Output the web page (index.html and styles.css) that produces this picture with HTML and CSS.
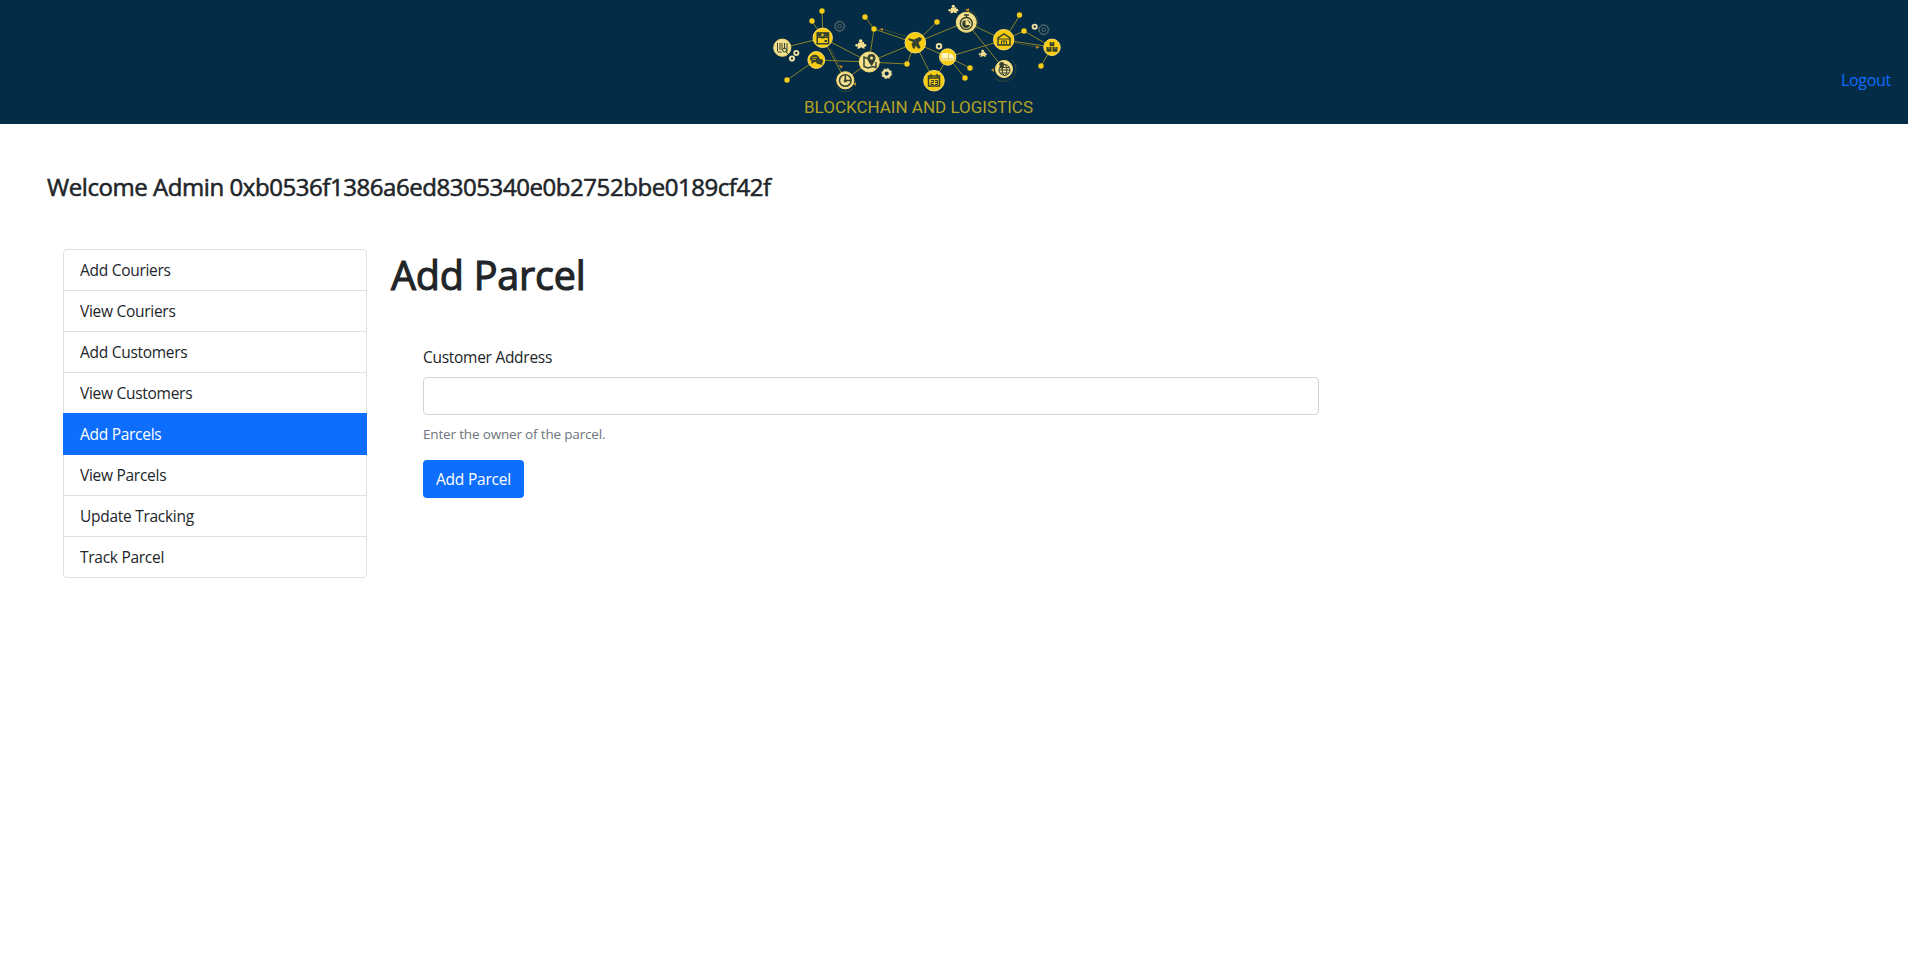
FILE: index.html
```html
<!DOCTYPE html>
<html lang="en">
<head>
<meta charset="utf-8">
<title>Blockchain and Logistics</title>
<link rel="stylesheet" href="styles.css">
</head>
<body>
<header class="topbar">
  <svg class="logo" viewBox="760 0 310 120" width="310" height="120" role="img" aria-label="Blockchain and Logistics">
    <defs>
      <g id="puzzle"><path d="M-2.800 -1.500L3.500 -2.200L3 .5L4 4.500L1 3.800L.5 2.500L-.5 4L-3.500 4.500L-2.600 1.800z"/><circle cx="0" cy="-3.300" r="1.800"/><circle cx="4" cy="1" r="1.500"/><circle cx="-4" cy="1" r="1.400"/></g>
      <g id="ring"><circle r="5.200" stroke-dasharray="1.3 1"/><circle r="4.500"/><circle r="1.800"/></g>
    </defs>
    <path class="links" d="M782 48L823 38L812 21M823 38L822 11M823 38L845 80L869 62L823 38M787 80L816 60L869 62L874 29L865 17M874 29L915 43L869 62L907 64L915 43L937 22M915 43L966 22L1004 40L1020 15M1004 40L1024 31L1052 47L1041 66M1004 40L1052 47M966 22L1004 69M915 43L948 57L1004 40M915 43L934 81L948 57L970 68M948 57L965 78"/>
    <path class="tracks" d="M831 49L840 67M882 29L905 36M837 87A11 11 0 0 0 853 89M970 11A11 11 0 0 1 975 29M1012 60A12 12 0 1 1 995 78M1015 43L1038 47"/>
    <path class="arrows" d="M839 65l4 1-2 3zM853 84l3-2v4zM879 29l4-1v3zM965 10l4-2v4zM1036 46l4 1-4 2zM991 70l3-2v4z"/>
    <g class="dots">
      <circle cx="822" cy="11" r="2.7"/><circle cx="812" cy="21" r="2.7"/><circle cx="865" cy="17" r="2.7"/><circle cx="874" cy="29" r="2.7"/><circle cx="787" cy="80" r="2.7"/><circle cx="907" cy="64" r="2.7"/><circle cx="937" cy="22" r="2.7"/><circle cx="970" cy="68" r="2.7"/><circle cx="965" cy="78" r="2.7"/><circle cx="1019.5" cy="15" r="2.7"/><circle cx="1024" cy="31" r="2.7"/><circle cx="1041" cy="66" r="2.7"/>
    </g>
    <g class="gears">
      <circle cx="796.3" cy="53" r="2.1"/><circle cx="792" cy="58.6" r="2.1"/><circle cx="939" cy="46.3" r="2.3"/><circle cx="1034.7" cy="26.7" r="2.1"/>
      <circle cx="886.7" cy="73.6" r="3.4" stroke-width="2.6"/><circle cx="886.7" cy="73.6" r="5" stroke-width="1" stroke-dasharray="2 1.9"/>
    </g>
    <g class="rings"><use href="#ring" x="839.7" y="26.3"/><use href="#ring" x="1043.7" y="29.7"/></g>
    <g class="pale"><use href="#puzzle" x="860.7" y="44.3"/><g transform="translate(953.3 9.3) scale(.9)"><use href="#puzzle"/></g><g transform="translate(982.7 53.5) scale(.75)"><use href="#puzzle"/></g></g>
    <g class="nodes">
      <circle class="pale" cx="782.3" cy="47.7" r="8.6"/><circle cx="822.7" cy="37.8" r="9.7"/><circle cx="816.3" cy="60" r="8.4"/>
      <circle class="pale" cx="845.3" cy="80.3" r="8.6"/><circle class="pale" cx="869.3" cy="62" r="10"/><circle cx="915.3" cy="42.7" r="10.3"/>
      <circle class="pale" cx="966.3" cy="22.3" r="10"/><circle cx="1003.7" cy="39.7" r="10.2"/><circle cx="1052" cy="47.3" r="8.2"/>
      <circle cx="947.7" cy="57" r="8.2"/><circle cx="934" cy="80.7" r="10.3"/><circle class="pale" cx="1004" cy="69" r="8.5"/>
    </g>
    <!-- barcode and scanner -->
    <path class="ink-line" d="M777.5 43v8M780 43v7M782 43v7M784.500 43v6M787 43v9M777.500 52h4"/><circle class="ink-line" cx="784.5" cy="50" r="2"/><path class="ink-line" d="M786 52l2 2"/>
    <!-- parcel -->
    <path class="ink-line wide" d="M817.200 33h11.300v10.800h-11.300zM817 37.300h12"/><path class="ink" d="M817 32.500h4.500v4H817zM823.500 32.500h5v4h-5zM824.500 40h2.500v2h-2.500zM821 36.500h3.500v2H821z"/>
    <!-- chat bubbles -->
    <ellipse class="ink" cx="814.700" cy="58.500" rx="4.700" ry="3.700"/><path class="ink" d="M811.500 61v3l3-2zM821 62l1.500 3.500-4-2z"/><ellipse class="ink" cx="819.500" cy="61.500" rx="3.500" ry="2.800"/><path class="sun-line" d="M812 57.500h5M812 59.500h4"/>
    <!-- pie clock -->
    <circle class="ink-line wide" cx="845.300" cy="80.500" r="5.800"/><path class="ink-line wide" d="M845.300 74.500v6h6"/><circle class="ink" cx="845.300" cy="80.800" r="1.600"/>
    <!-- map with pin -->
    <path class="ink-line wide" d="M869 59l-5-2v9.500l4 1.500 5-1.500 3 1V62"/><path class="ink" d="M871.500 66c-4-5-4-7-4-8a4 4 0 0 1 8 0c0 1 0 3-4 8z"/><circle class="pale" cx="871.500" cy="58" r="1.500"/>
    <!-- plane -->
    <path class="ink" d="M908.500 38.200L914 39.500L919.500 37L922 38.500L920.500 41L918.500 42.500L920.500 47.500L918.500 49L915.500 45.500L915 48.500L913 48.500L911.500 44L913 42L908.500 40z"/>
    <!-- stopwatch -->
    <circle class="ink-line wide" cx="966.300" cy="23.500" r="6"/><path class="ink-line wide" d="M964 15h5M966.500 15v3"/><path class="ink" d="M965.500 20a4 4 0 1 0 4.500 5h-4.500z"/><path class="ink-line" d="M967.500 20.500a3 3 0 0 1 2.500 3"/>
    <!-- warehouse -->
    <path class="ink-line wide" d="M998 45v-7l6-4 6 4v7z"/><path class="ink-line" d="M998 39h12M1001.500 45v-4h5v4M1004 41v4"/>
    <!-- calendar -->
    <path class="ink-line wide" d="M928.500 76h11v10h-11zM928.500 78h11M931 74v3M937 74v3"/><path class="ink-line" d="M931 80.500h2.500v2H931v2h3M935 80.500h2.500v4H935M935 82.500h2"/>
    <!-- truck -->
    <path class="white" d="M941.500 53h7v1h3.500l2 3v3.500h-12.500z"/><path class="sun-line" d="M948.500 54v5M942 59h11"/>
    <!-- globe with pin -->
    <g class="ink-line"><circle cx="1004.500" cy="70" r="5.500"/><ellipse cx="1004.500" cy="70" rx="2.300" ry="5.500"/><path d="M999 70h11M1000 67.500h9M1000 73h9"/></g><circle class="ink" cx="1001.800" cy="64.500" r="2.500"/><path class="ink" d="M999.700 65.500h4.200l-2.100 4z"/>
    <!-- stacked boxes -->
    <path class="ink" d="M1049.700 42h4.600v4.300h-4.600zM1046.500 47h5v4.700h-5zM1052.500 47h5v4.700h-5z"/><path class="sun-line" d="M1052 42v1.800M1049 47v2M1055 47v2"/>
    <text class="logo-text" x="804" y="112.500" textLength="229" lengthAdjust="spacingAndGlyphs">BLOCKCHAIN AND LOGISTICS</text>
  </svg>
  <a class="logout" href="#">Logout</a>
</header>
<main class="page">
  <h4 class="welcome">Welcome Admin 0xb0536f1386a6ed8305340e0b2752bbe0189cf42f</h4>
  <div class="columns">
    <nav class="menu">
      <a class="item" href="#">Add Couriers</a>
      <a class="item" href="#">View Couriers</a>
      <a class="item" href="#">Add Customers</a>
      <a class="item" href="#">View Customers</a>
      <a class="item active" href="#">Add Parcels</a>
      <a class="item" href="#">View Parcels</a>
      <a class="item" href="#">Update Tracking</a>
      <a class="item" href="#">Track Parcel</a>
    </nav>
    <section class="content">
      <h1 class="title">Add Parcel</h1>
      <form class="form">
        <label class="label" for="addr">Customer Address</label>
        <input class="input" id="addr" type="text">
        <div class="help">Enter the owner of the parcel.</div>
        <button class="btn" type="button">Add Parcel</button>
      </form>
    </section>
  </div>
</main>
</body>
</html>
```
FILE: styles.css
```css
* { box-sizing: border-box; }
body { margin: 0; background: #fff; color: #212529; font: 400 15.5px/24px "Segoe UI", "Open Sans", "Noto Sans", sans-serif; letter-spacing: -0.28px; }
h1, h4 { margin: 0; font-weight: 400; -webkit-text-stroke: 0.55px #212529; }
a { text-decoration: none; }

.topbar { height: 124px; background: #052c46; display: grid; grid-template-columns: 310px 1fr; padding: 0 17px 0 760px; }
.logo { display: block; letter-spacing: 0; }
.links { fill: none; stroke: #8a8427; stroke-width: 1; }
.tracks { fill: none; stroke: #6c682f; stroke-width: 0.8; stroke-dasharray: 1.5 1; }
.arrows { fill: #b98524; }
.dots { fill: #f5cd15; }
.gears { fill: none; stroke: #efe0a0; stroke-width: 1.9; }
.rings { fill: none; stroke: #6d7d72; stroke-width: 0.8; }
.pale { fill: #f5e08f; }
.nodes { fill: #f9cd0f; stroke: #f6dc6b; stroke-width: 1; }
.ink { fill: #34422f; }
.ink-line { fill: none; stroke: #34422f; stroke-width: 1; }
.wide { stroke-width: 1.5; }
.sun-line { fill: none; stroke: #d5b01c; stroke-width: 0.8; }
.white { fill: #fff4c4; }
.logo-text { font: 400 17.2px Roboto, sans-serif; fill: #b5a323; }
.logout { justify-self: end; margin-top: 68px; color: #0d6efd; font-size: 16px; }

.page { padding: 48px 47px 0; }
.welcome { font-size: 24px; line-height: 29px; letter-spacing: -0.44px; }
.columns { display: flex; margin: 48px 0 0 16px; }
.menu { width: 304px; height: 329px; border: 1px solid #dfdfdf; border-radius: 4px; }
.item { display: block; height: 41px; padding: 8px 16px; color: #212529; border-bottom: 1px solid #dfdfdf; }
.item:last-child { border-bottom: 0; }
.item.active { height: 42px; margin: -1px -1px 0; padding: 9px 17px 8px; background: #0d6efd; border-color: #0d6efd; color: #fff; }

.content { margin-left: 24px; }
.title { padding-top: 2px; font-size: 39.5px; line-height: 48px; letter-spacing: -0.2px; -webkit-text-stroke-width: 1.1px; }
.form { margin: 46px 0 0 32px; width: 896px; }
.label { display: block; margin-bottom: 8px; width: max-content; }
.input { display: block; width: 100%; height: 38px; border: 1px solid #ced4da; border-radius: 4px; padding: 6px 12px; font: inherit; }
.help { margin-top: 9px; font-size: 13.5px; line-height: 21px; letter-spacing: -0.17px; color: #6c757d; width: max-content; }
.btn { display: block; margin-top: 15px; width: 101px; height: 38px; padding: 0; border: 0; border-radius: 4px; background: #0d6efd; color: #fff; font: inherit; letter-spacing: -0.2px; white-space: nowrap; }
```
